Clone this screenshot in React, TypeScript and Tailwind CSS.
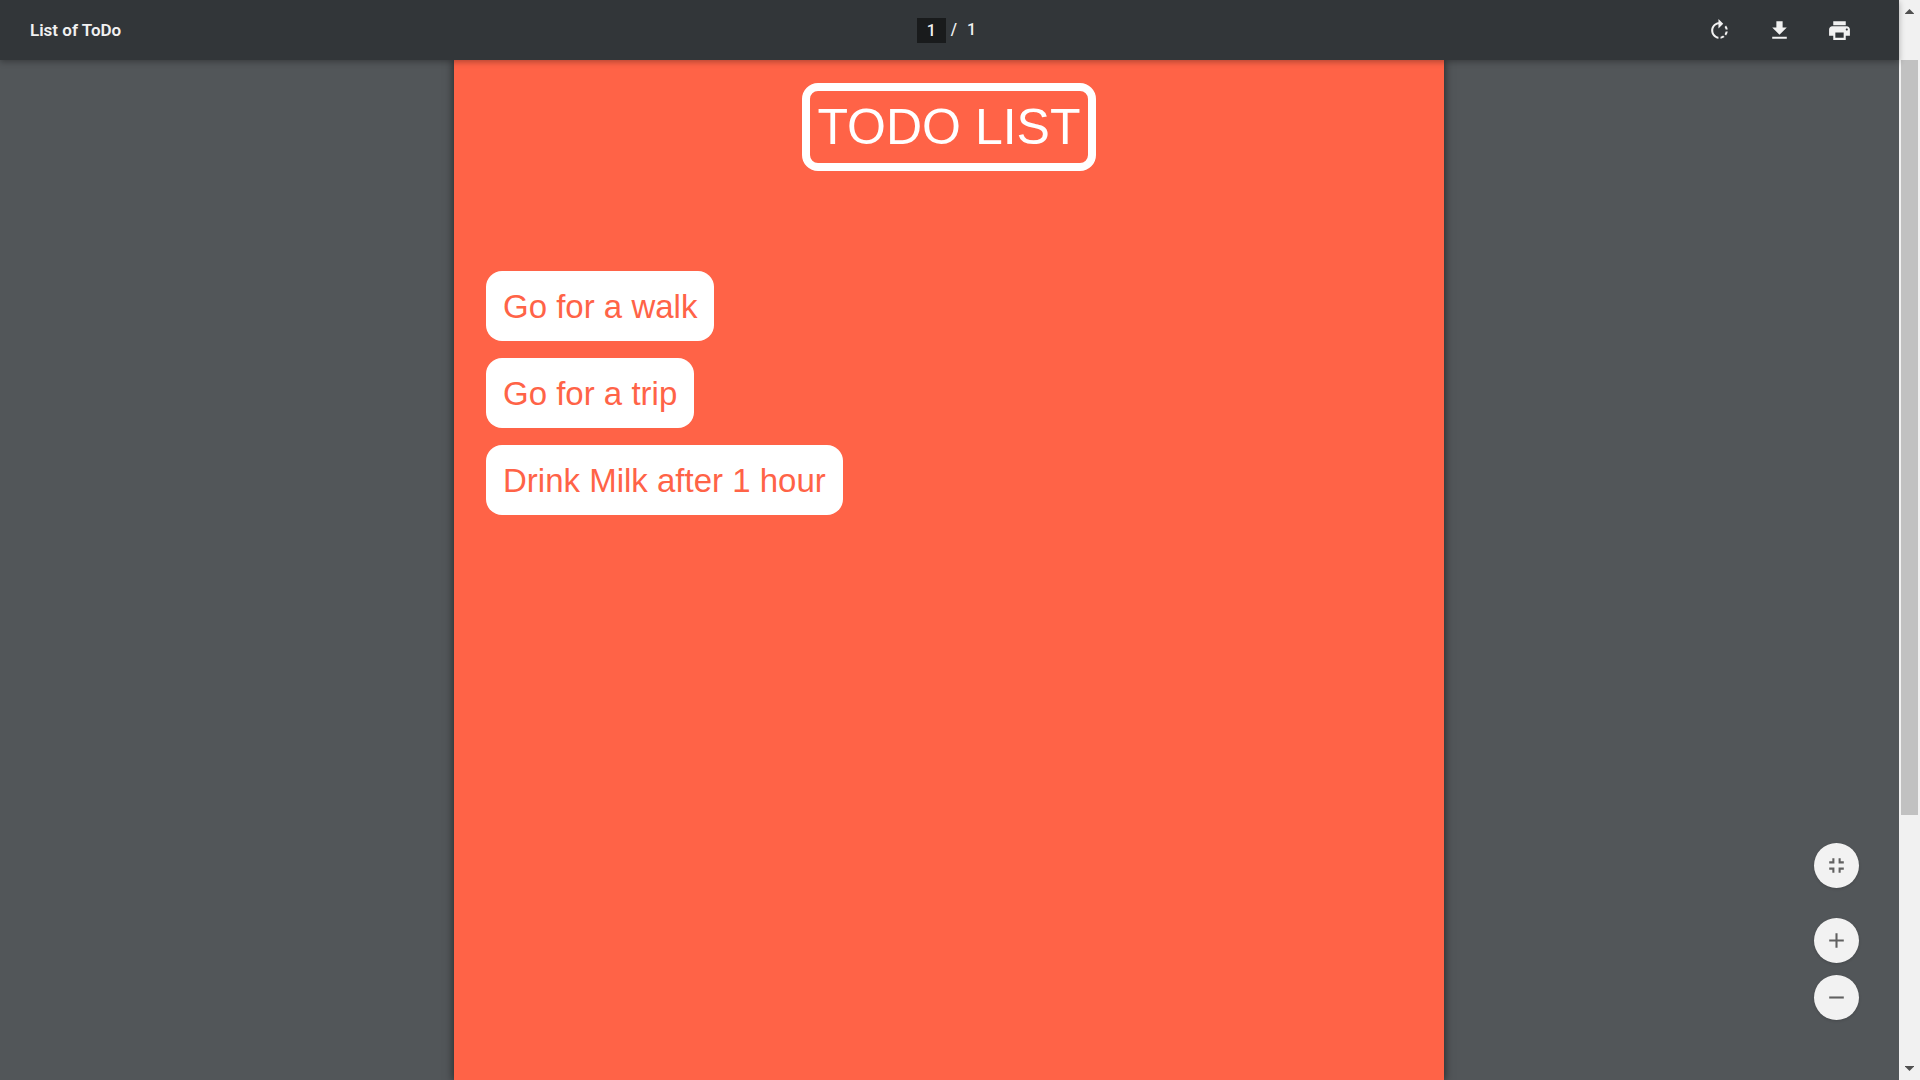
import type { ReactNode } from "react";

const todos = ["Go for a walk", "Go for a trip", "Drink Milk after 1 hour"];

function Icon({ d }: { d: string }) {
  return (
    <svg viewBox="0 0 24 24" className="size-[25px] fill-current" aria-hidden="true">
      <path d={d} />
    </svg>
  );
}

const paths = {
  rotate:
    "M15.55 5.55L11 1v3.07C7.06 4.56 4 7.92 4 12s3.05 7.44 7 7.93v-2.02c-2.84-.48-5-2.94-5-5.91s2.16-5.43 5-5.91V10l4.55-4.45zM19.93 11c-.17-1.39-.72-2.73-1.62-3.89l-1.42 1.42c.54.75.88 1.6 1.02 2.47h2.02zM13 17.9v2.02c1.39-.17 2.74-.71 3.9-1.61l-1.44-1.44c-.75.54-1.59.89-2.46 1.03zm3.89-2.42l1.42 1.41c.9-1.16 1.45-2.5 1.62-3.89h-2.02c-.14.87-.48 1.72-1.02 2.48z",
  download: "M19 9h-4V3H9v6H5l7 7 7-7zM5 18v2h14v-2H5z",
  print:
    "M19 8H5c-1.66 0-3 1.34-3 3v6h4v4h12v-4h4v-6c0-1.66-1.34-3-3-3zm-3 11H8v-5h8v5zm3-7c-.55 0-1-.45-1-1s.45-1 1-1 1 .45 1 1-.45 1-1 1zm-1-9H6v4h12V3z",
  fit: "M5 16h3v3h2v-5H5v2zm3-8H5v2h5V5H8v3zm6 11h2v-3h3v-2h-5v5zm2-11V5h-2v5h5V8h-3z",
  plus: "M19 13h-6v6h-2v-6H5v-2h6V5h2v6h6v2z",
  minus: "M19 13H5v-2h14v2z",
};

function ToolButton({ label, d }: { label: string; d: string }) {
  return (
    <button type="button" aria-label={label} className="flex size-10 items-center justify-center rounded-full">
      <Icon d={d} />
    </button>
  );
}

function ZoomButton({ label, d }: { label: string; d: string }) {
  return (
    <button
      type="button"
      aria-label={label}
      className="flex size-[45px] items-center justify-center rounded-full bg-[#f2f2f2] text-[#616161] shadow-[0_1px_3px_rgba(0,0,0,0.15)]"
    >
      <Icon d={d} />
    </button>
  );
}

function Toolbar() {
  return (
    <header className="z-10 grid h-[60px] shrink-0 grid-cols-[1fr_auto_1fr] items-center bg-[#323639] px-[30px] font-['Roboto',sans-serif] text-base text-[#f1f1f1] shadow-[0_2px_6px_rgba(0,0,0,0.3)]">
      <h1 className="pt-0.5 text-[17px] font-semibold">List of ToDo</h1>
      <div className="flex items-center pr-1.5 font-medium">
        <input
          aria-label="Page number"
          defaultValue="1"
          className="h-[25px] w-[29px] bg-[#191b1c] text-center outline-none"
        />
        <span className="ml-[5px]">/</span>
        <span className="ml-[10px]">1</span>
      </div>
      <div className="flex justify-end gap-5 pr-[10px]">
        <ToolButton label="Rotate clockwise" d={paths.rotate} />
        <ToolButton label="Download" d={paths.download} />
        <ToolButton label="Print" d={paths.print} />
      </div>
    </header>
  );
}

function Box({ children }: { children: ReactNode }) {
  return (
    <li className="flex h-[70px] items-center rounded-[16px] bg-white px-[17px] pt-px text-[33px] text-[#ff6347]">
      {children}
    </li>
  );
}

function Page() {
  return (
    <div className="flex grow justify-center pr-px">
      <main className="flex w-full max-w-[990px] flex-col items-center bg-[#ff6347] px-8 pt-[23px] font-['Liberation_Sans',sans-serif] shadow-[0_0_8px_1px_rgba(0,0,0,0.5)]">
        <h2 className="flex h-[88px] items-center rounded-[16px] border-8 border-white px-[7px] text-[50px] text-white">
          TODO LIST
        </h2>
        <ul className="mt-[100px] flex w-full flex-col items-start gap-[17px]">
          {todos.map((todo) => (
            <Box key={todo}>{todo}</Box>
          ))}
        </ul>
      </main>
    </div>
  );
}

function Scrollbar() {
  return (
    <div className="flex w-[21px] shrink-0 flex-col items-center bg-[#f1f1f1] text-[#505050]">
      <svg viewBox="0 0 21 21" className="size-[21px] fill-current" aria-hidden="true">
        <path d="M10.500 9L15 13.500V14H6V13.500Z" />
      </svg>
      <div className="flex w-full grow flex-col items-center pt-[39px]">
        <div className="w-[17px] grow-31 bg-[#c1c1c1]" />
        <div className="grow-10" />
      </div>
      <svg viewBox="0 0 21 21" className="size-[21px] fill-current" aria-hidden="true">
        <path d="M10.500 12L15 7.500V7H6V7.500Z" />
      </svg>
    </div>
  );
}

export default function App() {
  return (
    <div className="flex h-screen overflow-hidden bg-[#525659]">
      <div className="relative flex min-w-0 grow flex-col">
        <Toolbar />
        <Page />
        <div className="absolute right-10 bottom-[60px] flex flex-col">
          <ZoomButton label="Fit to page" d={paths.fit} />
          <div className="mt-[30px] flex flex-col gap-3">
            <ZoomButton label="Zoom in" d={paths.plus} />
            <ZoomButton label="Zoom out" d={paths.minus} />
          </div>
        </div>
      </div>
      <Scrollbar />
    </div>
  );
}
